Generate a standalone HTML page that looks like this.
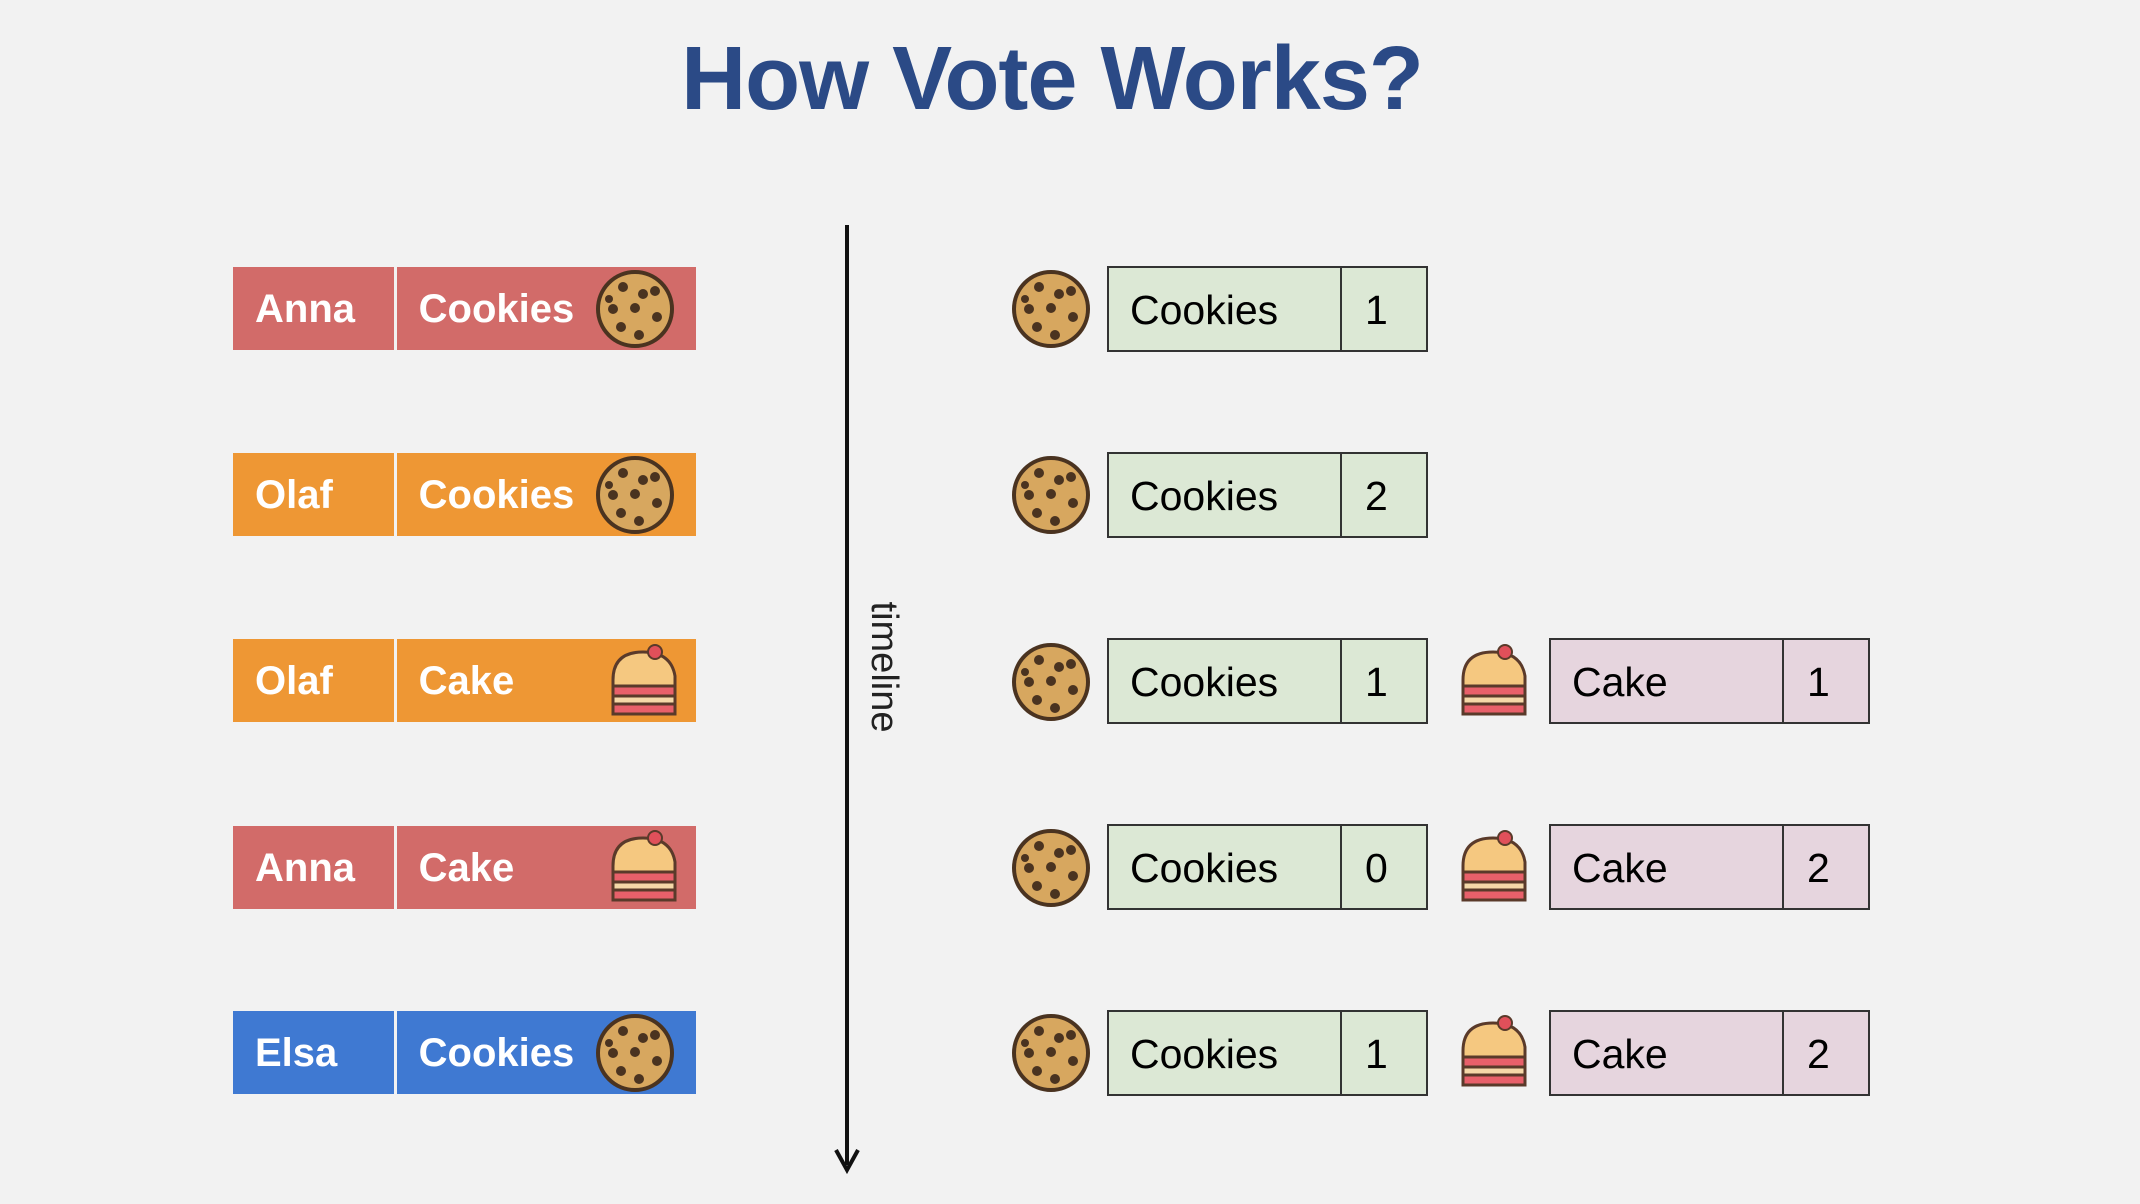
<!DOCTYPE html>
<html><head><meta charset="utf-8"><style>
body{margin:0;width:2140px;height:1204px;background:#f2f2f2;position:relative;overflow:hidden;font-family:"Liberation Sans",sans-serif}
.t{position:absolute;left:0;width:2104px;top:28px;text-align:center;font-size:90px;font-weight:bold;color:#2b4a86;letter-spacing:-1px}
.l{position:absolute;left:233px;width:463px;height:83px;display:flex}
.l div{height:83px;line-height:85px;color:#fff;font-size:40px;font-weight:bold;position:relative}
.l .n{width:161px;padding-left:22px;box-sizing:border-box}
.l .v{width:300px;margin-left:3px;padding-left:22px;box-sizing:border-box}
.r{position:absolute;left:1107px;width:321px;height:86px;border:2px solid #333;box-sizing:border-box;background:#dce8d5;font-size:41px}
.r span{position:absolute;top:0;line-height:84px}
.r .d{position:absolute;left:231px;top:0;bottom:0;border-left:2px solid #333}
.p{left:1549px;background:#e6d5de}
.ic{position:absolute}
</style></head><body>
<div class="t">How Vote Works?</div>
<svg width="0" height="0" style="position:absolute"><defs>
<g id="ck"><circle cx="0" cy="0" r="37" fill="#d7a75f" stroke="#4a3320" stroke-width="4"/>
<g fill="#4a3320"><circle cx="-12" cy="-22" r="5"/><circle cx="8" cy="-15" r="5"/><circle cx="20" cy="-18" r="5"/><circle cx="-22" cy="0" r="5"/><circle cx="0" cy="-1" r="5"/><circle cx="22" cy="8" r="5"/><circle cx="-14" cy="18" r="5"/><circle cx="4" cy="26" r="5"/><circle cx="-26" cy="-10" r="4"/></g></g>
<g id="cake"><path d="M-30 -2 Q-30 -30 0 -30 Q28 -30 32 -6 L32 4 L-30 4 Z" fill="#f5c880" stroke="#5a3a2a" stroke-width="3"/>
<circle cx="12" cy="-30" r="7" fill="#e0505a" stroke="#5a3a2a" stroke-width="2"/>
<rect x="-30" y="4" width="62" height="10" fill="#e8606a" stroke="#5a3a2a" stroke-width="3"/>
<rect x="-30" y="14" width="62" height="8" fill="#f5d8a8" stroke="#5a3a2a" stroke-width="3"/>
<rect x="-30" y="22" width="62" height="10" fill="#e8606a" stroke="#5a3a2a" stroke-width="3"/></g>
</defs></svg>

<div class="l" style="top:267px"><div class="n" style="background:#d26b69">Anna</div><div class="v" style="background:#d26b69">Cookies</div></div>
<div class="l" style="top:453px"><div class="n" style="background:#ee9734">Olaf</div><div class="v" style="background:#ee9734">Cookies</div></div>
<div class="l" style="top:639px"><div class="n" style="background:#ee9734">Olaf</div><div class="v" style="background:#ee9734">Cake</div></div>
<div class="l" style="top:826px"><div class="n" style="background:#d26b69">Anna</div><div class="v" style="background:#d26b69">Cake</div></div>
<div class="l" style="top:1011px"><div class="n" style="background:#3f79d2">Elsa</div><div class="v" style="background:#3f79d2">Cookies</div></div>

<svg class="ic" style="left:0;top:0" width="2140" height="1204">
<use href="#ck" x="635" y="309"/><use href="#ck" x="635" y="495"/><use href="#cake" x="643" y="682"/><use href="#cake" x="643" y="868"/><use href="#ck" x="635" y="1053"/>
<line x1="847" y1="225" x2="847" y2="1165" stroke="#111" stroke-width="4"/>
<path d="M836 1150 L847 1170 L858 1150" fill="none" stroke="#111" stroke-width="4"/>
<text x="0" y="0" transform="translate(872,667) rotate(90)" text-anchor="middle" font-family="Liberation Sans" font-size="38" fill="#222">timeline</text>
<use href="#ck" x="1051" y="309"/><use href="#ck" x="1051" y="495"/><use href="#ck" x="1051" y="682"/><use href="#ck" x="1051" y="868"/><use href="#ck" x="1051" y="1053"/>
<use href="#cake" x="1493" y="682"/><use href="#cake" x="1493" y="868"/><use href="#cake" x="1493" y="1053"/>
</svg>

<div class="r" style="top:266px"><span style="left:21px">Cookies</span><div class="d"></div><span style="left:256px">1</span></div>
<div class="r" style="top:452px"><span style="left:21px">Cookies</span><div class="d"></div><span style="left:256px">2</span></div>
<div class="r" style="top:638px"><span style="left:21px">Cookies</span><div class="d"></div><span style="left:256px">1</span></div>
<div class="r" style="top:824px"><span style="left:21px">Cookies</span><div class="d"></div><span style="left:256px">0</span></div>
<div class="r" style="top:1010px"><span style="left:21px">Cookies</span><div class="d"></div><span style="left:256px">1</span></div>
<div class="r p" style="top:638px"><span style="left:21px">Cake</span><div class="d"></div><span style="left:256px">1</span></div>
<div class="r p" style="top:824px"><span style="left:21px">Cake</span><div class="d"></div><span style="left:256px">2</span></div>
<div class="r p" style="top:1010px"><span style="left:21px">Cake</span><div class="d"></div><span style="left:256px">2</span></div>
</body></html>
